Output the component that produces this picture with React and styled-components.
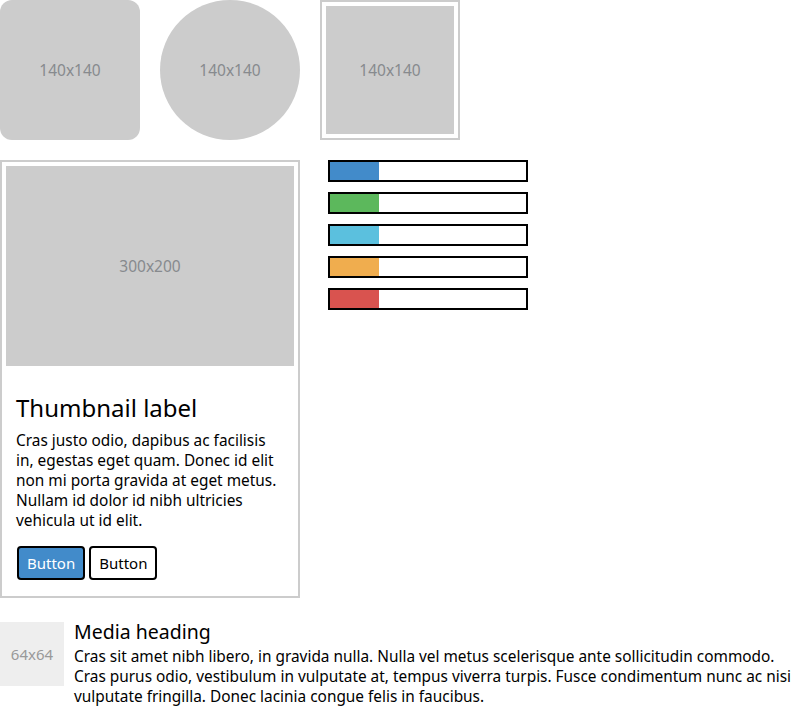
import React from "react";
import styled, { createGlobalStyle } from "styled-components";

const GlobalStyle = createGlobalStyle`
  html, body {
    margin: 0;
    padding: 0;
    background: #fff;
  }
  body {
    font-family: "Noto Sans", "Open Sans", "DejaVu Sans", sans-serif;
    font-size: 15.4px;
    line-height: 20px;
    color: #000;
  }
  * { box-sizing: border-box; }
`;

const Page = styled.div`
  display: flex;
  flex-direction: column;
  width: 795px;
`;

const ImageRow = styled.div`
  display: flex;
  gap: 20px;
`;

const Placeholder = styled.div`
  flex: none;
  display: flex;
  align-items: center;
  justify-content: center;
  width: ${(p) => p.$w}px;
  height: ${(p) => p.$h}px;
  background: ${(p) => p.$bg || "#ccc"};
  color: ${(p) => p.$fg || "#878a8e"};
  font-size: ${(p) => p.$fs || 15.5}px;
  border-radius: ${(p) => p.$radius || "0"};
`;

const Framed = styled.div`
  flex: none;
  width: 140px;
  height: 140px;
  padding: 4px;
  border: 2px solid #ccc;
  display: flex;
`;

const MiddleRow = styled.div`
  display: flex;
  align-items: flex-start;
  gap: 28px;
  margin-top: 20px;
`;

const Card = styled.div`
  flex: none;
  width: 300px;
  border: 2px solid #ccc;
  padding: 4px;
`;

const Caption = styled.div`
  padding: 9px 9px 12px 10px;
`;

const CaptionTitle = styled.h3`
  margin: 20px 0 10px;
  font-size: 24px;
  line-height: 26px;
  font-weight: 400;
`;

const CaptionText = styled.p`
  margin: 0 0 15px;
`;

const ButtonRow = styled.div`
  display: flex;
  gap: 4px;
  padding-left: 1px;
`;

const Button = styled.button`
  font-family: inherit;
  font-size: 15px;
  line-height: 20px;
  padding: 5px 8px;
  border: 2px solid #000;
  border-radius: 4px;
  background: ${(p) => (p.$primary ? "#428bca" : "#fff")};
  color: ${(p) => (p.$primary ? "#fff" : "#000")};
  cursor: pointer;
`;

const BarStack = styled.div`
  display: flex;
  flex-direction: column;
  gap: 10px;
`;

const Bar = styled.div`
  width: 200px;
  height: 22px;
  border: 2px solid #000;
  background: #fff;
`;

const BarFill = styled.div`
  height: 100%;
  background: ${(p) => p.$color};
`;

const Media = styled.div`
  display: flex;
  align-items: flex-start;
  gap: 10px;
  margin-top: 24px;
`;

const MediaBody = styled.div`
  flex: 1;
  min-width: 0;
`;

const MediaHeading = styled.h4`
  margin: 0 0 5px;
  font-size: 19.5px;
  line-height: 20px;
  font-weight: 400;
`;

const MediaText = styled.p`
  margin: 0;
`;

const bars = [
  { color: "#428bca", value: 25 },
  { color: "#5cb85c", value: 25 },
  { color: "#5bc0de", value: 25 },
  { color: "#f0ad4e", value: 25 },
  { color: "#d9534f", value: 25 },
];

export default function App() {
  return (
    <>
      <GlobalStyle />
      <Page>
        <ImageRow>
          <Placeholder $w={140} $h={140} $radius="12px">140x140</Placeholder>
          <Placeholder $w={140} $h={140} $radius="50%">140x140</Placeholder>
          <Framed>
            <Placeholder $w={128} $h={128}>140x140</Placeholder>
          </Framed>
        </ImageRow>
        <MiddleRow>
          <Card>
            <Placeholder $w={288} $h={200}>300x200</Placeholder>
            <Caption>
              <CaptionTitle>Thumbnail label</CaptionTitle>
              <CaptionText>
                Cras justo odio, dapibus ac facilisis in, egestas eget quam. Donec id elit non mi porta gravida at eget metus. Nullam id dolor id nibh ultricies vehicula ut id elit.
              </CaptionText>
              <ButtonRow>
                <Button $primary>Button</Button>
                <Button>Button</Button>
              </ButtonRow>
            </Caption>
          </Card>
          <BarStack>
            {bars.map((b, i) => (
              <Bar key={i}>
                <BarFill $color={b.color} style={{ width: `${b.value}%` }} />
              </Bar>
            ))}
          </BarStack>
        </MiddleRow>
        <Media>
          <Placeholder $w={64} $h={64} $bg="#eee" $fg="#999" $fs={15}>64x64</Placeholder>
          <MediaBody>
            <MediaHeading>Media heading</MediaHeading>
            <MediaText>
              Cras sit amet nibh libero, in gravida nulla. Nulla vel metus scelerisque ante sollicitudin commodo. Cras purus odio, vestibulum in vulputate at, tempus viverra turpis. Fusce condimentum nunc ac nisi vulputate fringilla. Donec lacinia congue felis in faucibus.
            </MediaText>
          </MediaBody>
        </Media>
      </Page>
    </>
  );
}
